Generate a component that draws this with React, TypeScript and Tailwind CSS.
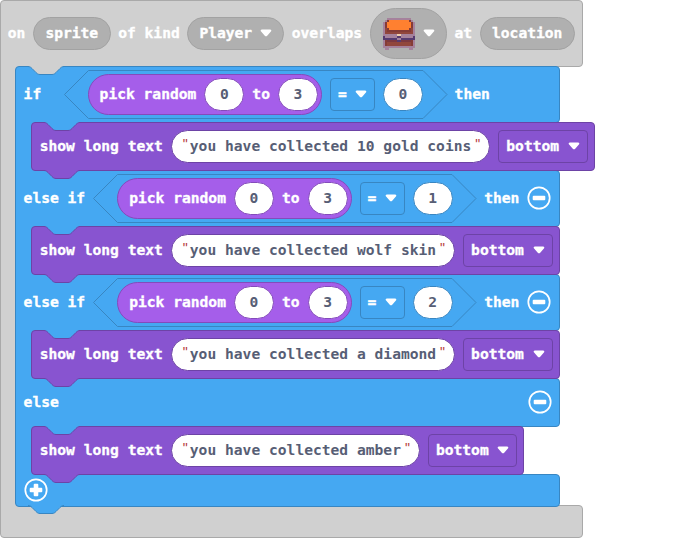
import type { ReactNode } from "react";

const NOTCH = "M0 .5c2 0 3 1 4 2l4 4c1 1 2 2 4 2h12c2 0 3-1 4-2l4-4c1-1 2-2 4-2";

function Notch({ className }: { className: string }) {
  return (
    <svg width="36" height="9" viewBox="0 0 36 9" className={`absolute z-20 ${className}`}>
      <path d={`${NOTCH}V0H0z`} stroke="none" />
      <path d={NOTCH} fill="none" strokeWidth="1" />
    </svg>
  );
}

function Arrow() {
  return (
    <svg width="12" height="8" viewBox="0 0 12 8" className="mb-px shrink-0 fill-white">
      <path d="M2 .4h8c1.400 0 1.700 1.300.9 2.100L7.200 6.700c-.7.8-1.700.8-2.400 0L1.100 2.500C.3 1.700.6.4 2 .4z" />
    </svg>
  );
}

function Label({ children, className = "" }: { children: ReactNode; className?: string }) {
  return <span className={`pb-0.5 [-webkit-text-stroke:0.35px_white] ${className}`}>{children}</span>;
}

function Pill({ children, width }: { children: ReactNode; width: string }) {
  return (
    <div className={`flex h-[33px] shrink-0 items-center justify-center rounded-full border border-[#a2a2a2] bg-[#b0b0b0] ${width}`}>
      {children}
    </div>
  );
}

function Num({ value, border }: { value: number; border: string }) {
  return (
    <div className={`flex h-[33px] w-10 shrink-0 items-center justify-center rounded-full border bg-white pb-0.5 text-[#575e75] ${border}`}>
      {value}
    </div>
  );
}

function Condition({ value }: { value: number }) {
  return (
    <div className="relative flex h-[49px] w-[383px] shrink-0 items-center px-6">
      <svg width="384" height="49" viewBox="0 0 384 49" className="absolute top-0 left-0 fill-none stroke-[#3886c2]">
        <path d="M24.500 .5H359L383 24.500 359 48.500H24.500L.5 24.500z" />
      </svg>
      <div className="relative flex h-[41px] w-[234.4px] shrink-0 items-center gap-2 rounded-full border border-[#844bbb] bg-[#a55eea] pl-[11px]">
        <Label>pick random</Label>
        <Num value={0} border="border-[#844bbb]" />
        <Label>to</Label>
        <Num value={3} border="border-[#844bbb]" />
      </div>
      <div className="relative mr-2 ml-2 flex h-[33px] w-[45px] shrink-0 items-center justify-between rounded-[4px] border border-[#3886c2] pr-[7px] pl-[7px]">
        <Label>=</Label>
        <Arrow />
      </div>
      <Num value={value} border="border-[#3886c2]" />
    </div>
  );
}

function MinusIcon() {
  return (
    <svg width="24" height="24" viewBox="0 0 24 24" className="mb-[2px] shrink-0">
      <circle cx="12" cy="12" r="10.700" fill="none" stroke="white" strokeWidth="1.700" />
      <rect x="5.700" y="9.700" width="12.600" height="4.600" rx="1" fill="white" />
    </svg>
  );
}

function PlusIcon() {
  return (
    <svg width="24" height="24" viewBox="0 0 24 24" className="mb-[2px] shrink-0">
      <circle cx="12" cy="12" r="10.700" fill="none" stroke="white" strokeWidth="1.700" />
      <path d="M10.700 5.700h2.600q1 0 1 1v3h3q1 0 1 1v2.600q0 1-1 1h-3v3q0 1-1 1h-2.600q-1 0-1-1v-3h-3q-1 0-1-1v-2.600q0-1 1-1h3v-3q0-1 1-1z" fill="white" />
    </svg>
  );
}

function Row({ children, className }: { children?: ReactNode; className: string }) {
  return (
    <div className={`relative -mb-px flex w-[545px] items-center rounded-r-[4px] border border-[#3886c2] bg-[#45a8f2] pl-[7.6px] ${className}`}>
      {children}
    </div>
  );
}

function Quote({ className = "" }: { className?: string }) {
  return (
    <span className={`w-[9px] pb-[5px] text-center font-['Liberation_Sans'] text-[14px] font-normal text-[#b73b3b] ${className}`}>
      "
    </span>
  );
}

function ShowText({ text }: { text: string }) {
  return (
    <div className="relative z-10 -mb-px flex h-[49px]">
      <div className="-mb-px w-6 shrink-0 border-l border-[#3886c2] bg-[#45a8f2]" />
      <div className="relative -ml-2 flex shrink-0 items-center gap-2 rounded-[4px] border border-[#6d43a6] bg-[#8854d0] pr-1.5 pl-[7.7px]">
        <Notch className="-top-px left-3 fill-[#45a8f2] stroke-[#6d43a6]" />
        <Label>show long text</Label>
        <div className="flex h-[33px] items-center rounded-full border border-[#6d43a6] bg-white px-[9px] text-[#575e75]">
          <Quote />
          <span className="pb-0.5">{text}</span>
          <Quote className="relative left-0.5" />
        </div>
        <div className="flex h-[33px] w-[89.4px] items-center justify-between rounded-[4px] border border-[#6d43a6] px-[7px]">
          <Label>bottom</Label>
          <Arrow />
        </div>
        <Notch className="-bottom-[9px] left-3 fill-[#8854d0] stroke-[#6d43a6]" />
      </div>
    </div>
  );
}

const CHEST = [
  "..mmmmmmmmmmmm..",
  ".mboooooooooobm.",
  "mboooooooooooobm",
  "mboooooooooooobm",
  "mboooooooooooobm",
  "mrboooooooooobrm",
  "mrbbbbbbbbbbbbrm",
  "mrrrrrrrrrrrrrrm",
  "mmmmmmmccmmmmmmm",
  "dmmmmmmddmmmmmmd",
  "dddddddmmddddddd",
  "mbkkkkkddkkkkkbm",
  "mbrrrrrrrrrrrrbm",
  "mbrrrrrrrrrrrrbm",
  "mmmmmmmmmmmmmmmm",
  ".mm..........mm.",
];

const CHEST_COLORS: Record<string, string> = {
  m: "#a5829c",
  b: "#853b36",
  r: "#91463c",
  o: "#ff8030",
  k: "#7b3840",
  d: "#563b70",
  c: "#f0cfae",
};

function Chest() {
  return (
    <svg width="32" height="32" viewBox="0 0 16 16" shapeRendering="crispEdges" className="shrink-0">
      {CHEST.flatMap((row, y) =>
        [...row].map((c, x) =>
          c === "." ? null : <rect key={`${x}-${y}`} x={x} y={y} width="1" height="1" fill={CHEST_COLORS[c]} />
        )
      )}
    </svg>
  );
}

export default function App() {
  return (
    <div className="h-[538px] w-[699px] overflow-hidden bg-white font-['DejaVu_Sans_Mono',monospace] text-[14.61px] leading-5 font-bold whitespace-pre text-white">
      <div className="-mb-px flex h-[67px] w-[583px] items-center gap-2 rounded-[4px] rounded-bl-none border border-[#a9a9a9] bg-[#d0d0d0] pl-[6.8px]">
        <Label>on</Label>
        <Pill width="w-[77.8px] -mx-[0.5px]">
          <Label>sprite</Label>
        </Pill>
        <Label>of kind</Label>
        <Pill width="w-[97px] -mx-[0.5px] gap-2">
          <Label>Player</Label>
          <Arrow />
        </Pill>
        <Label>overlaps</Label>
        <div className="flex h-[51px] w-[76.4px] shrink-0 items-center rounded-full border border-[#a2a2a2] bg-[#b0b0b0] pl-[11.4px]">
          <Chest />
          <div className="ml-2">
            <Arrow />
          </div>
        </div>
        <Label>at</Label>
        <Pill width="w-[95.2px] -mx-[0.5px]">
          <Label>location</Label>
        </Pill>
      </div>
      <div className="-mb-px flex">
        <div className="w-6 shrink-0 border-l border-[#a9a9a9] bg-[#d0d0d0]" />
        <div className="relative -ml-[9px] shrink-0">
          <Notch className="top-0 left-[13px] fill-[#d0d0d0] stroke-[#3886c2]" />
          <Row className="h-[57px] rounded-tl-[4px]">
            <Label className="w-10">if</Label>
            <Condition value={0} />
            <Label className="ml-2">then</Label>
          </Row>
          <ShowText text="you have collected 10 gold coins" />
          <Row className="h-[57px]">
            <Label className="mr-2">else if</Label>
            <Condition value={1} />
            <Label className="mr-2 ml-2">then</Label>
            <MinusIcon />
          </Row>
          <ShowText text="you have collected wolf skin" />
          <Row className="h-[57px]">
            <Label className="mr-2">else if</Label>
            <Condition value={2} />
            <Label className="mr-2 ml-2">then</Label>
            <MinusIcon />
          </Row>
          <ShowText text="you have collected a diamond" />
          <Row className="h-[49px] justify-between pr-[7.4px]">
            <Label>else</Label>
            <MinusIcon />
          </Row>
          <ShowText text="you have collected amber" />
          <Row className="h-[33px] rounded-bl-[4px]">
            <PlusIcon />
          </Row>
          <Notch className="-bottom-[8px] left-[13px] fill-[#45a8f2] stroke-[#3886c2]" />
        </div>
      </div>
      <div className="h-[33px] w-[583px] rounded-r-[4px] rounded-bl-[4px] border border-[#a9a9a9] bg-[#d0d0d0]" />
    </div>
  );
}
